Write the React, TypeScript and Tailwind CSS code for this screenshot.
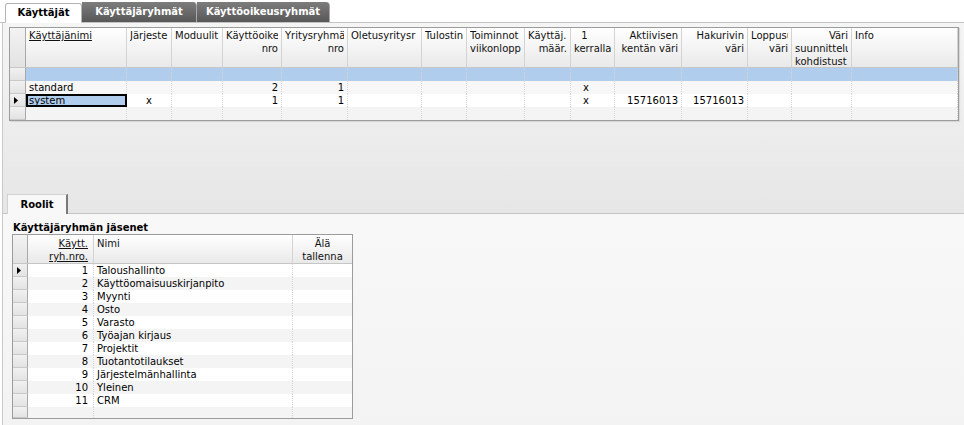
type Line = [string, string];

const font = "font-['DejaVu_Sans',_'Liberation_Sans',_sans-serif]";

const topCols =
  "grid grid-cols-[16px_101px_45px_51px_59px_66px_74px_45px_58px_46px_44px_67px_66px_44px_60px_1fr]";
const bottomCols = "grid grid-cols-[15px_66px_199px_1fr]";

// header texts as they show in the grid (long ones are cut by the column)
const topHeaders: { lines: Line[]; underline?: boolean }[] = [
  { lines: [["Käyttäjänimi", "text-left"]], underline: true },
  { lines: [["Järjeste", "text-left"]] },
  { lines: [["Moduulit", "text-left"]] },
  { lines: [["Käyttöoike", "text-left"], ["nro", "text-right"]] },
  { lines: [["Yritysryhmä", "text-left"], ["nro", "text-right"]] },
  { lines: [["Oletusyritysr", "text-left"]] },
  { lines: [["Tulostin", "text-left"]] },
  { lines: [["Toiminnot", "text-left"], ["viikonlopp", "text-left"]] },
  { lines: [["Käyttäj.", "text-left"], ["määr.", "text-right"]] },
  { lines: [["1", "text-center pr-[16px]"], ["kerralla", "text-center"]] },
  { lines: [["Aktiivisen", "text-right"], ["kentän väri", "text-right"]] },
  { lines: [["Hakurivin", "text-right"], ["väri", "text-right"]] },
  { lines: [["Loppusu", "text-left"], ["väri", "text-right"]] },
  { lines: [["Väri", "text-right"], ["suunnittelu", "text-left"], ["kohdistust", "text-left"]] },
  { lines: [["Info", "text-left"]] },
];

const topAlign = [
  "text-left",
  "text-center",
  "text-left",
  "text-right",
  "text-right",
  "text-left",
  "text-left",
  "text-left",
  "text-right",
  "text-center pr-[16px]",
  "text-right",
  "text-right",
  "text-right",
  "text-right",
  "text-left",
];

const topRows: { cells: string[]; bg: string; current?: boolean }[] = [
  { cells: Array(15).fill(""), bg: "bg-[#b1cdee]" },
  { cells: ["standard", "", "", "2", "1", "", "", "", "", "x", "", "", "", "", ""], bg: "bg-[#f7f7f7]" },
  {
    cells: ["system", "x", "", "1", "1", "", "", "", "", "x", "15716013", "15716013", "", "", ""],
    bg: "bg-white",
    current: true,
  },
  { cells: Array(15).fill(""), bg: "bg-[#f4f4f4]" },
];

const groups = [
  "Taloushallinto",
  "Käyttöomaisuuskirjanpito",
  "Myynti",
  "Osto",
  "Varasto",
  "Työajan kirjaus",
  "Projektit",
  "Tuotantotilaukset",
  "Järjestelmänhallinta",
  "Yleinen",
  "CRM",
];

function Arrow() {
  return (
    <svg width="4" height="7" viewBox="0 0 4 7" className="block">
      <polygon points="0,0 4,3.5 0,7" fill="#000" />
    </svg>
  );
}

function RowHead({ current, h = "h-[13px]" }: { current?: boolean; h?: string }) {
  return (
    <div
      className={`${h} flex items-center pl-[4px] bg-linear-to-b from-[#f1f1f1] to-[#e3e3e3] border-r border-b border-r-[#a9a9a9] border-b-[#c9c9c9]`}
    >
      {current && <Arrow />}
    </div>
  );
}

function UsersGrid() {
  return (
    <div className="w-[950px] border border-[#9c9c9c] bg-white shadow-[1px_1px_1px_#d8d8d8]">
      {/* header */}
      <div className={`${topCols} h-[40px] border-b border-[#c6c6c6] bg-linear-to-b from-white to-[#e9e9e9]`}>
        <div className="border-r border-[#a9a9a9] bg-linear-to-b from-[#f3f3f3] to-[#e2e2e2]" />
        {topHeaders.map((h, i) => (
          <div key={i} className="overflow-hidden px-[3px] pt-[1px] border-r border-[#d3d3d3] text-[#111]">
            {h.lines.map(([t, a], j) => (
              <div
                key={j}
                className={`whitespace-nowrap overflow-hidden leading-[13px] ${a} ${h.underline ? "underline" : ""}`}
              >
                {t}
              </div>
            ))}
          </div>
        ))}
      </div>
      {/* rows */}
      {topRows.map((r, i) => (
        <div key={i} className={`${topCols} h-[13px] ${r.bg}`}>
          <RowHead current={r.current} />
          {r.cells.map((c, j) =>
            r.current && j === 0 ? (
              <div
                key={j}
                className="h-[13px] border-2 border-black bg-[#b1cdee] px-[1px] leading-[9px] whitespace-nowrap overflow-hidden"
              >
                {c}
              </div>
            ) : (
              <div
                key={j}
                className={`h-[13px] px-[3px] leading-[13px] whitespace-nowrap overflow-hidden border-r border-dotted border-[#d6d6d6] ${topAlign[j]}`}
              >
                {c}
              </div>
            ),
          )}
        </div>
      ))}
    </div>
  );
}

function MembersGrid() {
  return (
    <div className="w-[341px] border border-[#9c9c9c] bg-white">
      <div className={`${bottomCols} h-[29px] border-b border-[#c6c6c6] bg-linear-to-b from-white to-[#e9e9e9] text-[#111]`}>
        <div className="border-r border-[#a9a9a9] bg-linear-to-b from-[#f3f3f3] to-[#e2e2e2]" />
        <div className="px-[5px] pt-[2px] border-r border-[#d3d3d3] text-right leading-[13px]">
          <div className="underline">Käytt.</div>
          <div className="underline">ryh.nro.</div>
        </div>
        <div className="px-[3px] pt-[2px] border-r border-[#d3d3d3] leading-[13px]">Nimi</div>
        <div className="px-[3px] pt-[2px] text-center leading-[13px]">
          <div>Älä</div>
          <div>tallenna</div>
        </div>
      </div>
      {groups.map((g, i) => (
        <div key={g} className={`${bottomCols} h-[13px] ${i % 2 === 0 ? "bg-white" : "bg-[#f4f4f4]"}`}>
          <RowHead current={i === 0} />
          <div className="px-[5px] text-right leading-[13px] border-r border-dotted border-[#d6d6d6]">{i + 1}</div>
          <div className="px-[3px] leading-[13px] whitespace-nowrap border-r border-dotted border-[#d6d6d6]">{g}</div>
          <div />
        </div>
      ))}
      <div className={`${bottomCols} h-[11px] bg-[#f4f4f4]`}>
        <RowHead h="h-[11px]" />
        <div className="border-r border-dotted border-[#d6d6d6]" />
        <div className="border-r border-dotted border-[#d6d6d6]" />
        <div />
      </div>
    </div>
  );
}

export default function App() {
  return (
    <div className={`w-[964px] h-[425px] overflow-hidden bg-white text-[10px] text-black ${font}`}>
      {/* main tabs */}
      <div className="h-[23px] flex items-end pl-[5px] border-b border-[#c4c4c4]">
        <div className="w-[77px] h-[20px] -mb-px bg-white border border-[#b4b4b4] border-b-white rounded-t-[3px] text-center font-bold leading-[17px]">
          Käyttäjät
        </div>
        <div className="w-[115px] h-[20px] bg-linear-to-b from-[#7d7d7d] to-[#585858] border-r border-[#a8a8a8] rounded-tr-[4px] text-center text-white font-bold leading-[19px]">
          Käyttäjäryhmät
        </div>
        <div className="w-[133px] h-[20px] bg-linear-to-b from-[#7d7d7d] to-[#585858] border-r border-[#a8a8a8] rounded-tr-[4px] text-center text-white font-bold leading-[19px]">
          Käyttöoikeusryhmät
        </div>
      </div>

      <div className="ml-[2px] border-l border-[#c9c9c9]">
        {/* users panel */}
        <div className="h-[191px] flex flex-col justify-between border-b border-[#c4c4c4] bg-linear-to-b from-[#f5f5f5] to-[#e6e6e6]">
          <div className="pt-[4px] pl-[6px]">
            <UsersGrid />
          </div>
          <div className="pl-[4px] flex">
            <div className="w-[61px] h-[20px] -mb-px bg-[#f8f8f8] border-t border-l border-[#d2d2d2] border-r-2 border-r-[#7a7a7a] text-center font-bold leading-[19px]">
              Roolit
            </div>
          </div>
        </div>

        {/* roles panel */}
        <div className="h-[211px] bg-linear-to-b from-[#f8f8f8] to-[#f3f3f3] pl-[9px]">
          <div className="pl-[1px] pt-[7px] font-bold leading-[13px]">Käyttäjäryhmän jäsenet</div>
          <MembersGrid />
        </div>
      </div>
    </div>
  );
}
